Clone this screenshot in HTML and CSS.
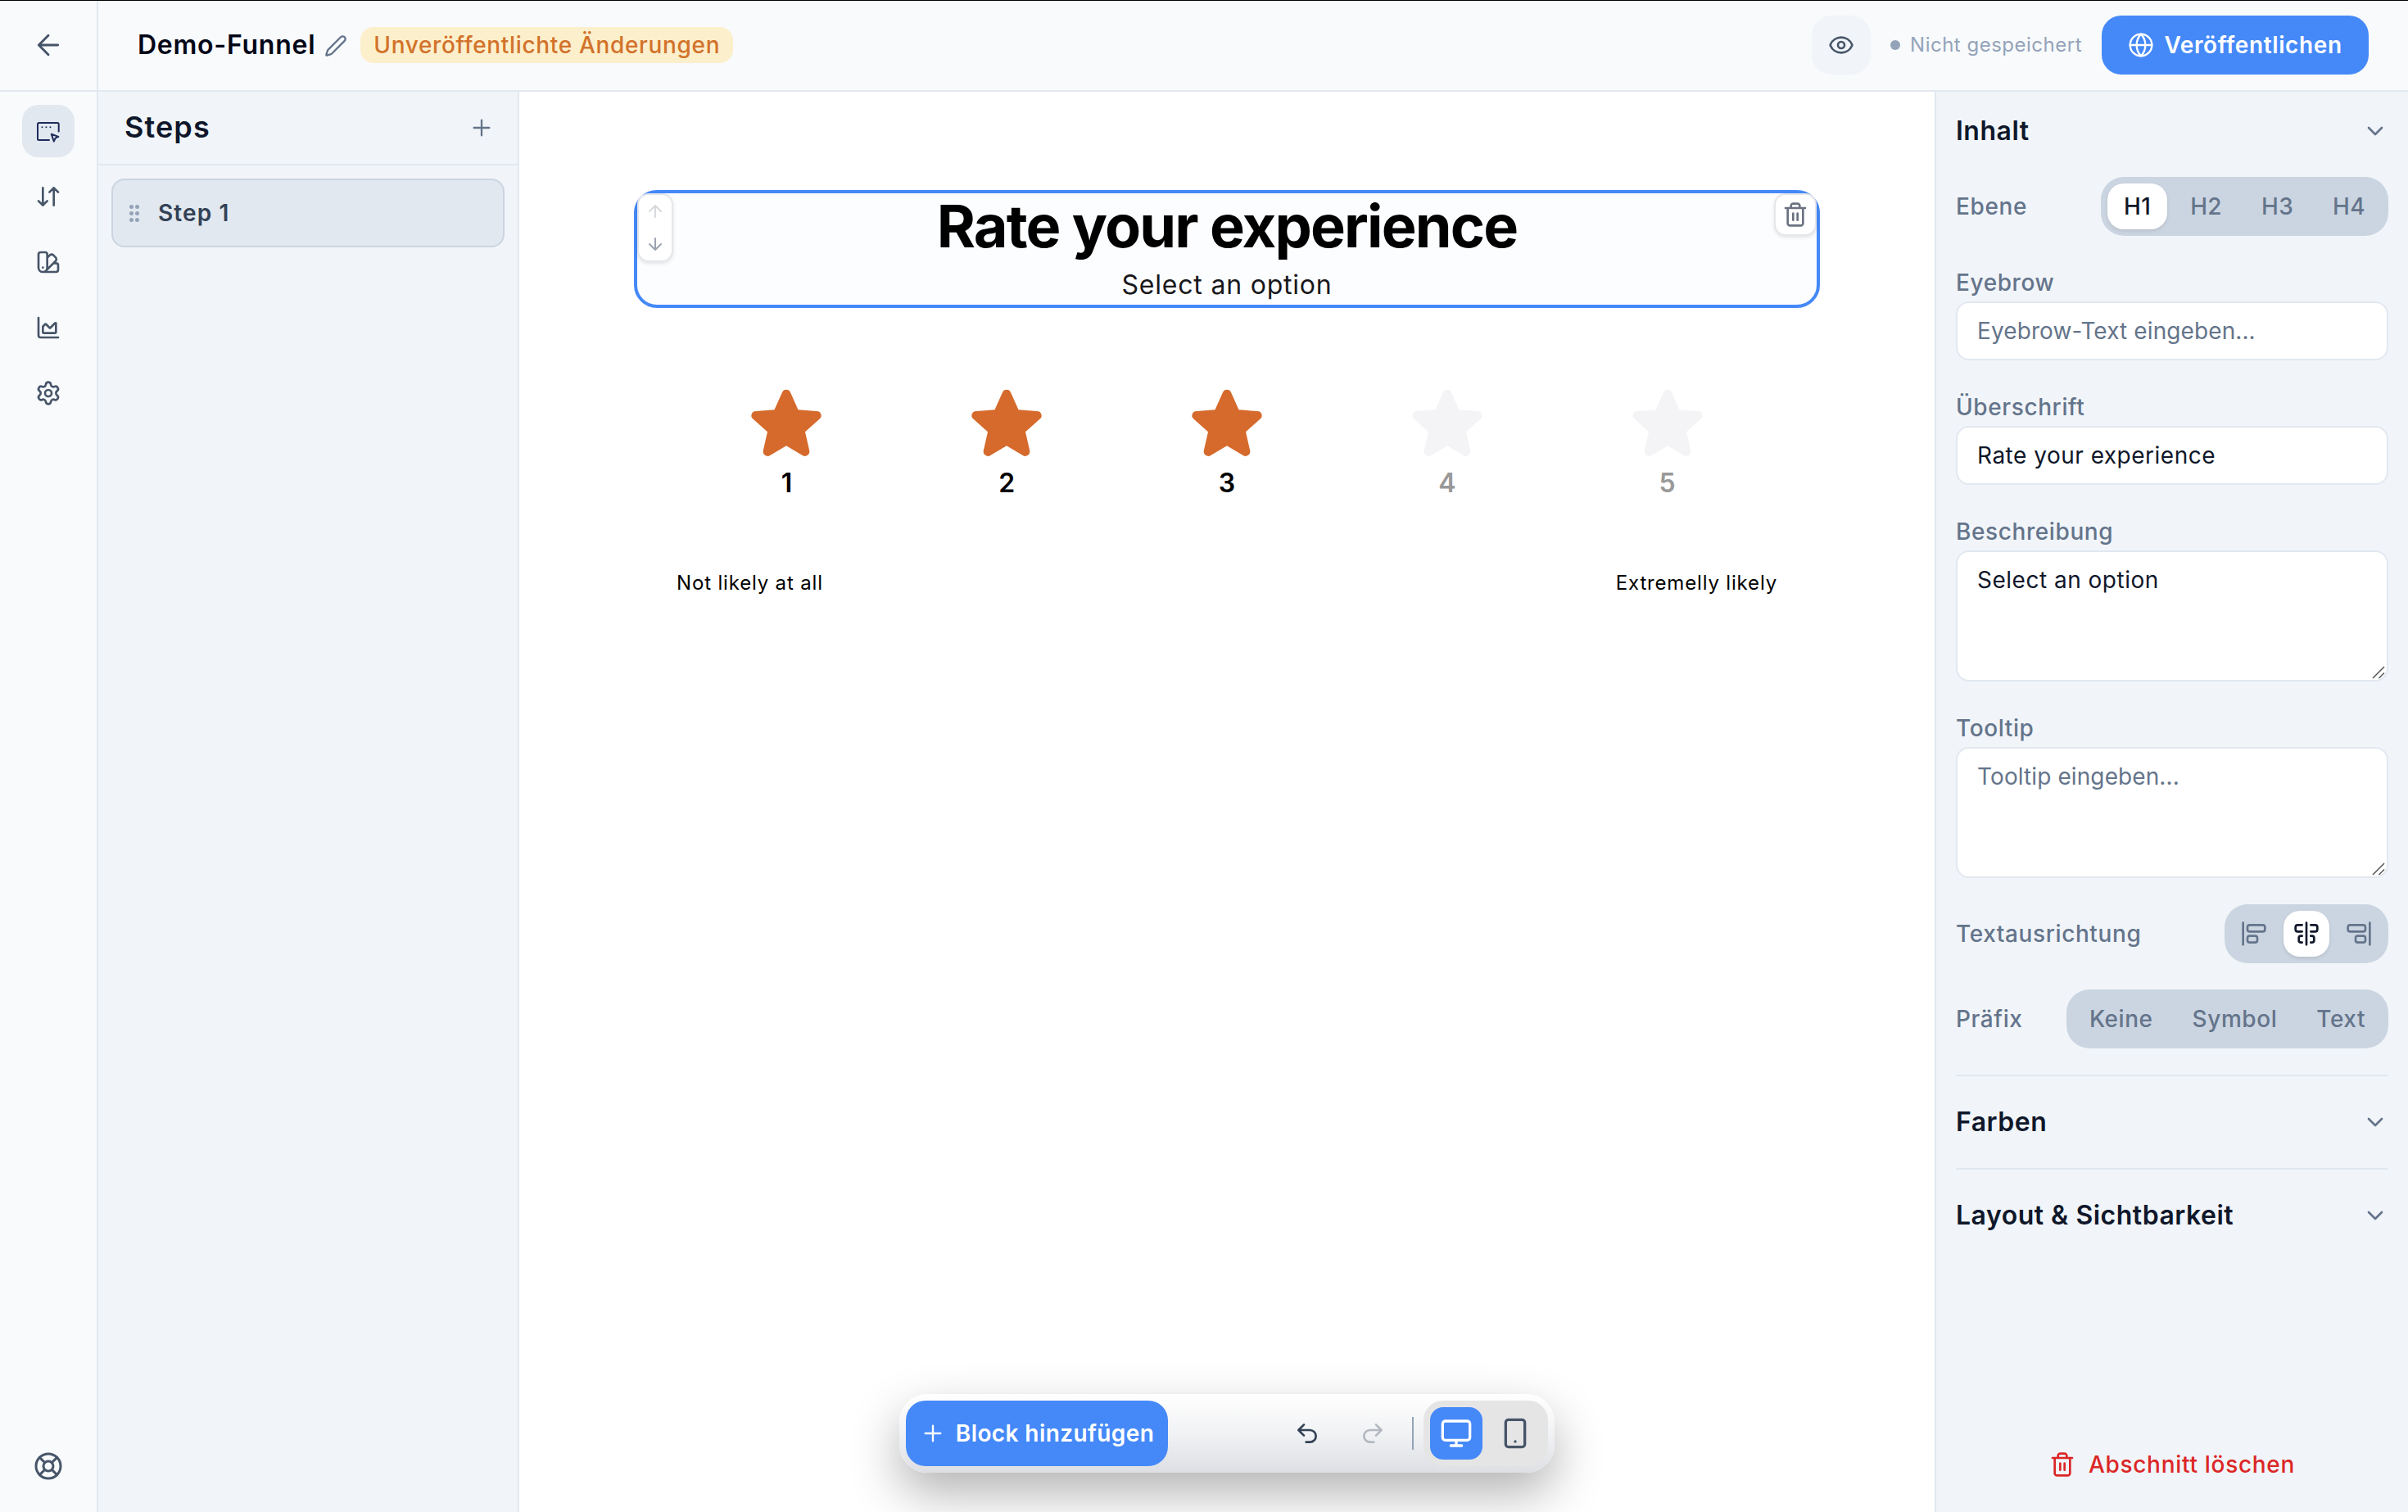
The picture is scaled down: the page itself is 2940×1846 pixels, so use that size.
FILE: index.html
```html
<!DOCTYPE html>
<html lang="de">

<head>
    <meta charset="UTF-8">
    <meta name="viewport" content="width=device-width, initial-scale=1.0">
    <title>Demo-Funnel</title>
    <link rel="stylesheet" href="styles.css">
</head>

<body>
    <svg class="sprite" xmlns="http://www.w3.org/2000/svg">
        <symbol id="arrow-left" viewBox="0 0 24 24"><path d="m12 19-7-7 7-7M19 12H5" /></symbol>
        <symbol id="arrow-up" viewBox="0 0 24 24"><path d="m5 12 7-7 7 7M12 19V5" /></symbol>
        <symbol id="arrow-down" viewBox="0 0 24 24"><path d="M12 5v14M19 12l-7 7-7-7" /></symbol>
        <symbol id="pen" viewBox="0 0 24 24"><path d="M21.174 6.812a1 1 0 0 0-3.986-3.987L3.842 16.174a2 2 0 0 0-.5.83l-1.321 4.352a.5.5 0 0 0 .623.622l4.353-1.32a2 2 0 0 0 .83-.497z" /></symbol>
        <symbol id="eye" viewBox="0 0 24 24"><path d="M2.062 12.348a1 1 0 0 1 0-.696 10.75 10.75 0 0 1 19.876 0 1 1 0 0 1 0 .696 10.75 10.75 0 0 1-19.876 0" /><circle cx="12" cy="12" r="3" /></symbol>
        <symbol id="globe" viewBox="0 0 24 24"><circle cx="12" cy="12" r="10" /><path d="M12 2a14.5 14.5 0 0 0 0 20 14.5 14.5 0 0 0 0-20M2 12h20" /></symbol>
        <symbol id="editor" viewBox="0 0 32 32"><path d="M17 27H4.5A1.5 1.5 0 0 1 3 25.500v-18A1.500 1.500 0 0 1 4.500 6h22.700a1.500 1.500 0 0 1 1.500 1.500v9M8.400 11.300h.01M13.400 11.300h.01M18.400 11.300h.01M19.700 19.700l8.600 3.200-3.700 1.800-1.800 4z" /></symbol>
        <symbol id="flow" viewBox="0 0 24 24"><path d="m3 16 4 4 4-4M7 20V4M21 8l-4-4-4 4M17 4v16" /></symbol>
        <symbol id="swatch" viewBox="0 0 24 24"><path d="M11 17a4 4 0 0 1-8 0V5a2 2 0 0 1 2-2h4a2 2 0 0 1 2 2ZM16.700 13H19a2 2 0 0 1 2 2v4a2 2 0 0 1-2 2H7M7 17h.01M11 8l2.300-2.300a2.400 2.400 0 0 1 3.404.004L18.600 7.600a2.400 2.400 0 0 1 .026 3.434L9.900 19.800" /></symbol>
        <symbol id="chart" viewBox="0 0 24 24"><path d="M3 3v16a2 2 0 0 0 2 2h16M7 11.207a.5.5 0 0 1 .146-.353l2-2a.5.5 0 0 1 .708 0l3.292 3.292a.5.5 0 0 0 .708 0l4.292-4.292a.5.5 0 0 1 .854.353V16a1 1 0 0 1-1 1H8a1 1 0 0 1-1-1z" /></symbol>
        <symbol id="settings" viewBox="0 0 24 24"><path d="M9.671 4.136a2.340 2.340 0 0 1 4.659 0 2.340 2.340 0 0 0 3.319 1.915 2.340 2.340 0 0 1 2.330 4.033 2.340 2.340 0 0 0 0 3.831 2.340 2.340 0 0 1-2.330 4.033 2.340 2.340 0 0 0-3.319 1.915 2.340 2.340 0 0 1-4.659 0 2.340 2.340 0 0 0-3.320-1.915 2.340 2.340 0 0 1-2.330-4.033 2.340 2.340 0 0 0 0-3.831A2.340 2.340 0 0 1 6.350 6.051a2.340 2.340 0 0 0 3.319-1.915" /><circle cx="12" cy="12" r="3" /></symbol>
        <symbol id="help" viewBox="0 0 24 24"><circle cx="12" cy="12" r="10" /><circle cx="12" cy="12" r="4" /><path d="m4.930 4.930 4.240 4.240M14.830 9.170l4.240-4.240M14.830 14.830l4.240 4.240M9.170 14.830l-4.240 4.240" /></symbol>
        <symbol id="plus" viewBox="0 0 24 24"><path d="M5 12h14M12 5v14" /></symbol>
        <symbol id="chevron" viewBox="0 0 24 24"><path d="m6 9 6 6 6-6" /></symbol>
        <symbol id="trash" viewBox="0 0 24 24"><path d="M3 6h18M19 6v14c0 1-1 2-2 2H7c-1 0-2-1-2-2V6M8 6V4c0-1 1-2 2-2h4c1 0 2 1 2 2v2M10 11v6M14 11v6" /></symbol>
        <symbol id="align-left" viewBox="0 0 24 24"><rect width="9" height="6" x="6" y="14" rx="2" /><rect width="16" height="6" x="6" y="4" rx="2" /><path d="M2 2v20" /></symbol>
        <symbol id="align-center" viewBox="0 0 24 24"><path d="M12 2v20M8 10H4a2 2 0 0 1-2-2V6c0-1.100.9-2 2-2h4M16 10h4a2 2 0 0 0 2-2V6a2 2 0 0 0-2-2h-4M8 20H7a2 2 0 0 1-2-2v-2c0-1.100.9-2 2-2h1M16 14h1a2 2 0 0 1 2 2v2a2 2 0 0 1-2 2h-1" /></symbol>
        <symbol id="align-right" viewBox="0 0 24 24"><rect width="16" height="6" x="2" y="4" rx="2" /><rect width="9" height="6" x="9" y="14" rx="2" /><path d="M22 22V2" /></symbol>
        <symbol id="undo" viewBox="0 0 24 24"><path d="M9 14 4 9l5-5M4 9h10.500a5.500 5.500 0 0 1 0 11H11" /></symbol>
        <symbol id="redo" viewBox="0 0 24 24"><path d="m15 14 5-5-5-5M20 9H9.500a5.500 5.500 0 0 0 0 11H13" /></symbol>
        <symbol id="monitor" viewBox="0 0 24 24"><rect width="20" height="14" x="2" y="3" rx="2" /><path d="M8 21h8M12 17v4" /></symbol>
        <symbol id="phone" viewBox="0 0 24 24"><rect width="14" height="20" x="5" y="2" rx="2" /><path d="M12 18h.01" /></symbol>
        <symbol id="star" viewBox="0 0 86 84"><path d="M37.900 5.200A5.500 5.500 0 0 1 48.100 5.200L57.500 26.300 80 28A5.500 5.500 0 0 1 82.800 38.300L66 53.300 71.200 76A5.600 5.600 0 0 1 62.800 82L43 70.300 23.200 82A5.600 5.600 0 0 1 14.800 76L20 53.300 3.200 38.300A5.500 5.500 0 0 1 6 28L28.500 26.300Z" /></symbol>
    </svg>

    <header class="header">
        <div class="back"><svg class="icon icon-back"><use href="#arrow-left" /></svg></div>
        <h1 class="funnel-name">Demo-Funnel</h1>
        <svg class="icon icon-pen"><use href="#pen" /></svg>
        <span class="badge">Unveröffentlichte Änderungen</span>
        <div class="header-actions">
            <button class="preview"><svg class="icon"><use href="#eye" /></svg></button>
            <span class="save-state">Nicht gespeichert</span>
            <button class="publish"><svg class="icon"><use href="#globe" /></svg>Veröffentlichen</button>
        </div>
    </header>

    <main class="workspace">
        <nav class="rail">
            <a class="rail-item active"><svg class="icon"><use href="#editor" /></svg></a>
            <a class="rail-item"><svg class="icon"><use href="#flow" /></svg></a>
            <a class="rail-item"><svg class="icon"><use href="#swatch" /></svg></a>
            <a class="rail-item"><svg class="icon"><use href="#chart" /></svg></a>
            <a class="rail-item"><svg class="icon"><use href="#settings" /></svg></a>
            <a class="rail-item rail-help"><svg class="icon"><use href="#help" /></svg></a>
        </nav>

        <aside class="steps">
            <div class="steps-head">
                <h2>Steps</h2>
                <svg class="icon"><use href="#plus" /></svg>
            </div>
            <div class="step">
                <span class="grip"><i></i><i></i><i></i><i></i><i></i><i></i></span>
                <span class="step-name">Step 1</span>
            </div>
        </aside>

        <section class="canvas">
            <div class="block selected">
                <h2 class="block-title">Rate your experience</h2>
                <p class="block-text">Select an option</p>
                <div class="move">
                    <svg class="icon disabled"><use href="#arrow-up" /></svg>
                    <svg class="icon"><use href="#arrow-down" /></svg>
                </div>
                <div class="remove"><svg class="icon"><use href="#trash" /></svg></div>
            </div>

            <div class="rating">
                <div class="rate on"><svg class="star"><use href="#star" /></svg><span>1</span></div>
                <div class="rate on"><svg class="star"><use href="#star" /></svg><span>2</span></div>
                <div class="rate on"><svg class="star"><use href="#star" /></svg><span>3</span></div>
                <div class="rate"><svg class="star"><use href="#star" /></svg><span>4</span></div>
                <div class="rate"><svg class="star"><use href="#star" /></svg><span>5</span></div>
            </div>
            <div class="rating-labels">
                <span>Not likely at all</span>
                <span>Extremelly likely</span>
            </div>

            <div class="toolbar">
                <button class="add-block"><svg class="icon"><use href="#plus" /></svg>Block hinzufügen</button>
                <button class="history"><svg class="icon"><use href="#undo" /></svg></button>
                <button class="history disabled"><svg class="icon"><use href="#redo" /></svg></button>
                <span class="divider"></span>
                <div class="devices">
                    <button class="device active"><svg class="icon"><use href="#monitor" /></svg></button>
                    <button class="device"><svg class="icon"><use href="#phone" /></svg></button>
                </div>
            </div>
        </section>

        <aside class="panel">
            <div class="section-head first"><h3>Inhalt</h3><svg class="icon"><use href="#chevron" /></svg></div>

            <div class="row">
                <label>Ebene</label>
                <div class="segment segment-level">
                    <button class="active">H1</button>
                    <button>H2</button>
                    <button>H3</button>
                    <button>H4</button>
                </div>
            </div>

            <div class="field">
                <label>Eyebrow</label>
                <div class="input placeholder">Eyebrow-Text eingeben...</div>
            </div>
            <div class="field">
                <label>Überschrift</label>
                <div class="input">Rate your experience</div>
            </div>
            <div class="field">
                <label>Beschreibung</label>
                <div class="input textarea">Select an option<svg class="resize" viewBox="0 0 16 16"><path d="M1 15 15 1M8.500 15 15 8.500" /></svg></div>
            </div>
            <div class="field">
                <label>Tooltip</label>
                <div class="input textarea placeholder">Tooltip eingeben...<svg class="resize" viewBox="0 0 16 16"><path d="M1 15 15 1M8.500 15 15 8.500" /></svg></div>
            </div>

            <div class="row row-align">
                <label>Textausrichtung</label>
                <div class="segment segment-icons">
                    <button><svg class="icon"><use href="#align-left" /></svg></button>
                    <button class="active"><svg class="icon"><use href="#align-center" /></svg></button>
                    <button><svg class="icon"><use href="#align-right" /></svg></button>
                </div>
            </div>
            <div class="row row-prefix">
                <label>Präfix</label>
                <div class="segment">
                    <button>Keine</button>
                    <button>Symbol</button>
                    <button>Text</button>
                </div>
            </div>

            <div class="section-head"><h3>Farben</h3><svg class="icon"><use href="#chevron" /></svg></div>
            <div class="section-head"><h3>Layout &amp; Sichtbarkeit</h3><svg class="icon"><use href="#chevron" /></svg></div>

            <button class="delete"><svg class="icon"><use href="#trash" /></svg>Abschnitt löschen</button>
        </aside>
    </main>
</body>

</html>
```
FILE: styles.css
```css
* {
    box-sizing: border-box;
    margin: 0;
    padding: 0;
}

body {
    display: flex;
    flex-direction: column;
    width: 2940px;
    height: 1846px;
    overflow: hidden;
    border-top: 1px solid #000;
    background: #fff;
    color: #0f172a;
    font-family: Inter, "Liberation Sans", sans-serif;
    font-size: 28px;
    letter-spacing: 0.6px;
    line-height: 40px;
}

button {
    display: flex;
    align-items: center;
    justify-content: center;
    border: 0;
    background: none;
    color: inherit;
    font: inherit;
    letter-spacing: inherit;
}

.sprite {
    display: none;
}

.icon {
    flex: none;
    width: 32px;
    height: 32px;
    fill: none;
    stroke: currentColor;
    stroke-width: 2;
    stroke-linecap: round;
    stroke-linejoin: round;
}

/* header */
.header {
    display: flex;
    flex: none;
    align-items: center;
    height: 111px;
    border-bottom: 2px solid #e2e8f0;
    background: #f8fafc;
}

.back {
    display: flex;
    align-items: center;
    justify-content: center;
    width: 120px;
    height: 100%;
    padding-bottom: 1px;
    border-right: 2px solid #e2e8f0;
    color: #475569;
}

.icon-back {
    width: 40px;
    height: 40px;
    stroke-width: 1.75;
}

.funnel-name {
    margin-left: 48px;
    margin-bottom: 2px;
    font-size: 32px;
    font-weight: 600;
    letter-spacing: 0.75px;
    color: #020617;
}

.icon-pen {
    width: 28px;
    height: 28px;
    margin-left: 11px;
    color: #64748b;
}

.badge {
    height: 44px;
    margin-left: 16px;
    margin-bottom: 1px;
    padding: 0 16px;
    border-radius: 16px;
    background: #fcefcb;
    color: #d2722a;
    font-weight: 500;
    letter-spacing: 0.66px;
    line-height: 44px;
}

.header-actions {
    display: flex;
    align-items: center;
    margin-left: auto;
    margin-right: 48px;
    margin-bottom: 1px;
}

.preview {
    width: 72px;
    height: 72px;
    border-radius: 24px;
    background: #f1f5f9;
    color: #475569;
}

.save-state {
    display: flex;
    align-items: center;
    gap: 12px;
    margin: 0 24px;
    color: #94a3b8;
    font-size: 24px;
    letter-spacing: 0.5px;
}

.save-state::before {
    content: "";
    width: 12px;
    height: 12px;
    border-radius: 50%;
    background: #94a3b8;
}

.publish {
    gap: 12px;
    width: 326px;
    height: 72px;
    border-radius: 24px;
    background: #4589f8;
    color: #fff;
    font-weight: 600;
}

.publish .icon {
    stroke-width: 1.75;
}

/* layout */
.workspace {
    display: flex;
    flex: 1;
    min-height: 0;
}

.rail {
    display: flex;
    flex-direction: column;
    align-items: center;
    gap: 16px;
    width: 120px;
    padding: 16px 0 24px;
    border-right: 2px solid #e2e8f0;
    background: #f8fafc;
    color: #475569;
}

.rail-item {
    display: flex;
    align-items: center;
    justify-content: center;
    width: 64px;
    height: 64px;
    border-radius: 20px;
}

.rail-item.active {
    background: #e2e8f0;
    color: #1e2a5a;
}

.rail-help {
    margin-top: auto;
}

.rail-help .icon {
    width: 36px;
    height: 36px;
}

/* steps */
.steps {
    width: 514px;
    border-right: 2px solid #e2e8f0;
    background: #f1f5f9;
}

.steps-head {
    display: flex;
    align-items: center;
    justify-content: space-between;
    height: 90px;
    padding: 0 28px 0 32px;
    border-bottom: 2px solid #e2e8f0;
}

.steps-head h2 {
    margin-bottom: 2px;
    font-size: 36px;
    font-weight: 600;
    letter-spacing: 1.1px;
}

.steps-head .icon {
    color: #64748b;
    stroke-width: 1.75;
}

.step {
    display: flex;
    align-items: center;
    gap: 23px;
    height: 84px;
    margin: 16px;
    padding-left: 20px;
    border: 2px solid #cbd5e1;
    border-radius: 16px;
    background: #e2e8f0;
    color: #334155;
    font-weight: 600;
    letter-spacing: 1.1px;
}

.grip {
    display: grid;
    grid-template-columns: 5px 5px;
    gap: 3px 2px;
}

.grip i {
    width: 5px;
    height: 5px;
    border-radius: 50%;
    background: #94a3b8;
}

/* canvas */
.canvas {
    position: relative;
    display: flex;
    flex: 1;
    flex-direction: column;
    align-items: center;
    padding-top: 120px;
    color: #000;
}

.block {
    position: relative;
    width: 1448px;
    height: 144px;
    border: 4px solid #4589f8;
    border-radius: 28px;
    background: #fcfdff;
    text-align: center;
}

.block-title {
    padding-top: 4px;
    font-size: 72px;
    font-weight: 700;
    letter-spacing: -1.85px;
    line-height: 72px;
}

.block-text {
    margin-top: 16px;
    color: #18181b;
    font-size: 32px;
    letter-spacing: 0.8px;
}

.move,
.remove {
    position: absolute;
    top: 0;
    display: flex;
    flex-direction: column;
    align-items: center;
    border: 2px solid #e5e7eb;
    border-radius: 14px;
    background: #fff;
    box-shadow: 0 2px 4px rgba(0, 0, 0, 0.1);
}

.move {
    left: 0;
    gap: 16px;
    width: 44px;
    height: 84px;
    padding-top: 8px;
    color: #9ca3af;
}

.move .icon {
    width: 24px;
    height: 24px;
}

.move .disabled {
    opacity: 0.4;
}

.remove {
    right: 0;
    justify-content: center;
    width: 52px;
    height: 52px;
    color: #6b7280;
}

.rating {
    display: flex;
    width: 1344px;
    margin-top: 98px;
}

.rate {
    display: flex;
    flex: 1;
    flex-direction: column;
    align-items: center;
    color: #999;
    font-size: 32px;
    font-weight: 600;
    letter-spacing: 0;
}

.rate.on {
    color: #000;
}

.star {
    width: 86px;
    height: 84px;
    margin-bottom: 12px;
    fill: #f4f4f6;
}

.on .star {
    fill: #d56a2c;
}

.rating-labels {
    display: flex;
    justify-content: space-between;
    width: 1344px;
    margin-top: 82px;
    font-size: 24px;
    letter-spacing: 0.83px;
}

.toolbar {
    display: flex;
    align-items: center;
    width: 800px;
    height: 96px;
    margin-top: auto;
    margin-bottom: 48px;
    padding: 0 8px;
    border-radius: 34px;
    background: linear-gradient(#fff, #f1f2f4 50%, #dddfe4);
    box-shadow: 0 25px 60px rgba(0, 0, 0, 0.3);
}

.add-block {
    gap: 12px;
    width: 320px;
    height: 80px;
    margin-right: auto;
    border-radius: 24px;
    background: #4589f8;
    color: #fff;
    font-weight: 600;
    letter-spacing: 0.4px;
}

.add-block .icon {
    stroke-width: 1.75;
}

.history {
    width: 80px;
    height: 64px;
    color: #334155;
}

.history.disabled {
    color: #b4b9c1;
}

.divider {
    width: 2px;
    height: 40px;
    margin: 0 12px 0 8px;
    background: #94a3b8;
}

.devices {
    display: flex;
    gap: 8px;
    padding: 8px;
    border-radius: 24px;
    background: #e5e5e5;
}

.device {
    width: 64px;
    height: 64px;
    border-radius: 16px;
    color: #475569;
}

.device.active {
    background: #4589f8;
    color: #fff;
}

.device .icon {
    width: 40px;
    height: 40px;
}

/* settings panel */
.panel {
    display: flex;
    flex-direction: column;
    width: 578px;
    padding: 0 24px;
    border-left: 2px solid #e2e8f0;
    background: #f1f5f9;
}

.section-head {
    display: flex;
    align-items: center;
    justify-content: space-between;
    height: 114px;
    border-top: 2px solid #e2e8f0;
}

.section-head.first {
    height: 96px;
    border-top: 0;
}

.section-head h3 {
    font-size: 32px;
    font-weight: 600;
    letter-spacing: 0.5px;
}

.section-head .icon {
    color: #64748b;
}

.panel label {
    color: #64748b;
    font-weight: 500;
}

.row {
    display: flex;
    align-items: center;
    justify-content: space-between;
    height: 72px;
}

.section-head.first + .row {
    margin: 8px 0 36px;
}

.segment {
    display: flex;
    gap: 8px;
    padding: 8px;
    border-radius: 28px;
    background: #cbd5e1;
    color: #64748b;
    font-weight: 500;
    letter-spacing: 0.55px;
}

.segment button {
    height: 56px;
    padding: 0 20px;
    border-radius: 20px;
}

.segment-level {
    letter-spacing: 0.35px;
}

.segment-icons button {
    width: 56px;
    padding: 0;
}

.segment .active {
    background: #fff;
    color: #0f172a;
    box-shadow: 0 2px 4px rgba(0, 0, 0, 0.1);
}

.field {
    display: flex;
    flex-direction: column;
    gap: 3px;
    margin-bottom: 36px;
}

.field label {
    height: 41px;
    line-height: 42px;
}

.input {
    position: relative;
    height: 72px;
    padding: 14px 24px;
    border: 2px solid #e2e8f0;
    border-radius: 16px;
    background: #fff;
    letter-spacing: 0.5px;
}

.textarea {
    height: 160px;
}

.placeholder {
    color: #64748b;
    letter-spacing: 0.1px;
}

.resize {
    position: absolute;
    right: 2px;
    bottom: 1px;
    width: 16px;
    height: 16px;
    fill: none;
    stroke: #555;
    stroke-width: 1.5;
}

.row-align {
    margin-top: -4px;
}

.row-prefix {
    margin: 32px 0;
}

.delete {
    gap: 16px;
    height: 64px;
    margin-top: auto;
    margin-bottom: 26px;
    color: #dc2626;
    font-weight: 500;
    letter-spacing: 0.7px;
}
```
